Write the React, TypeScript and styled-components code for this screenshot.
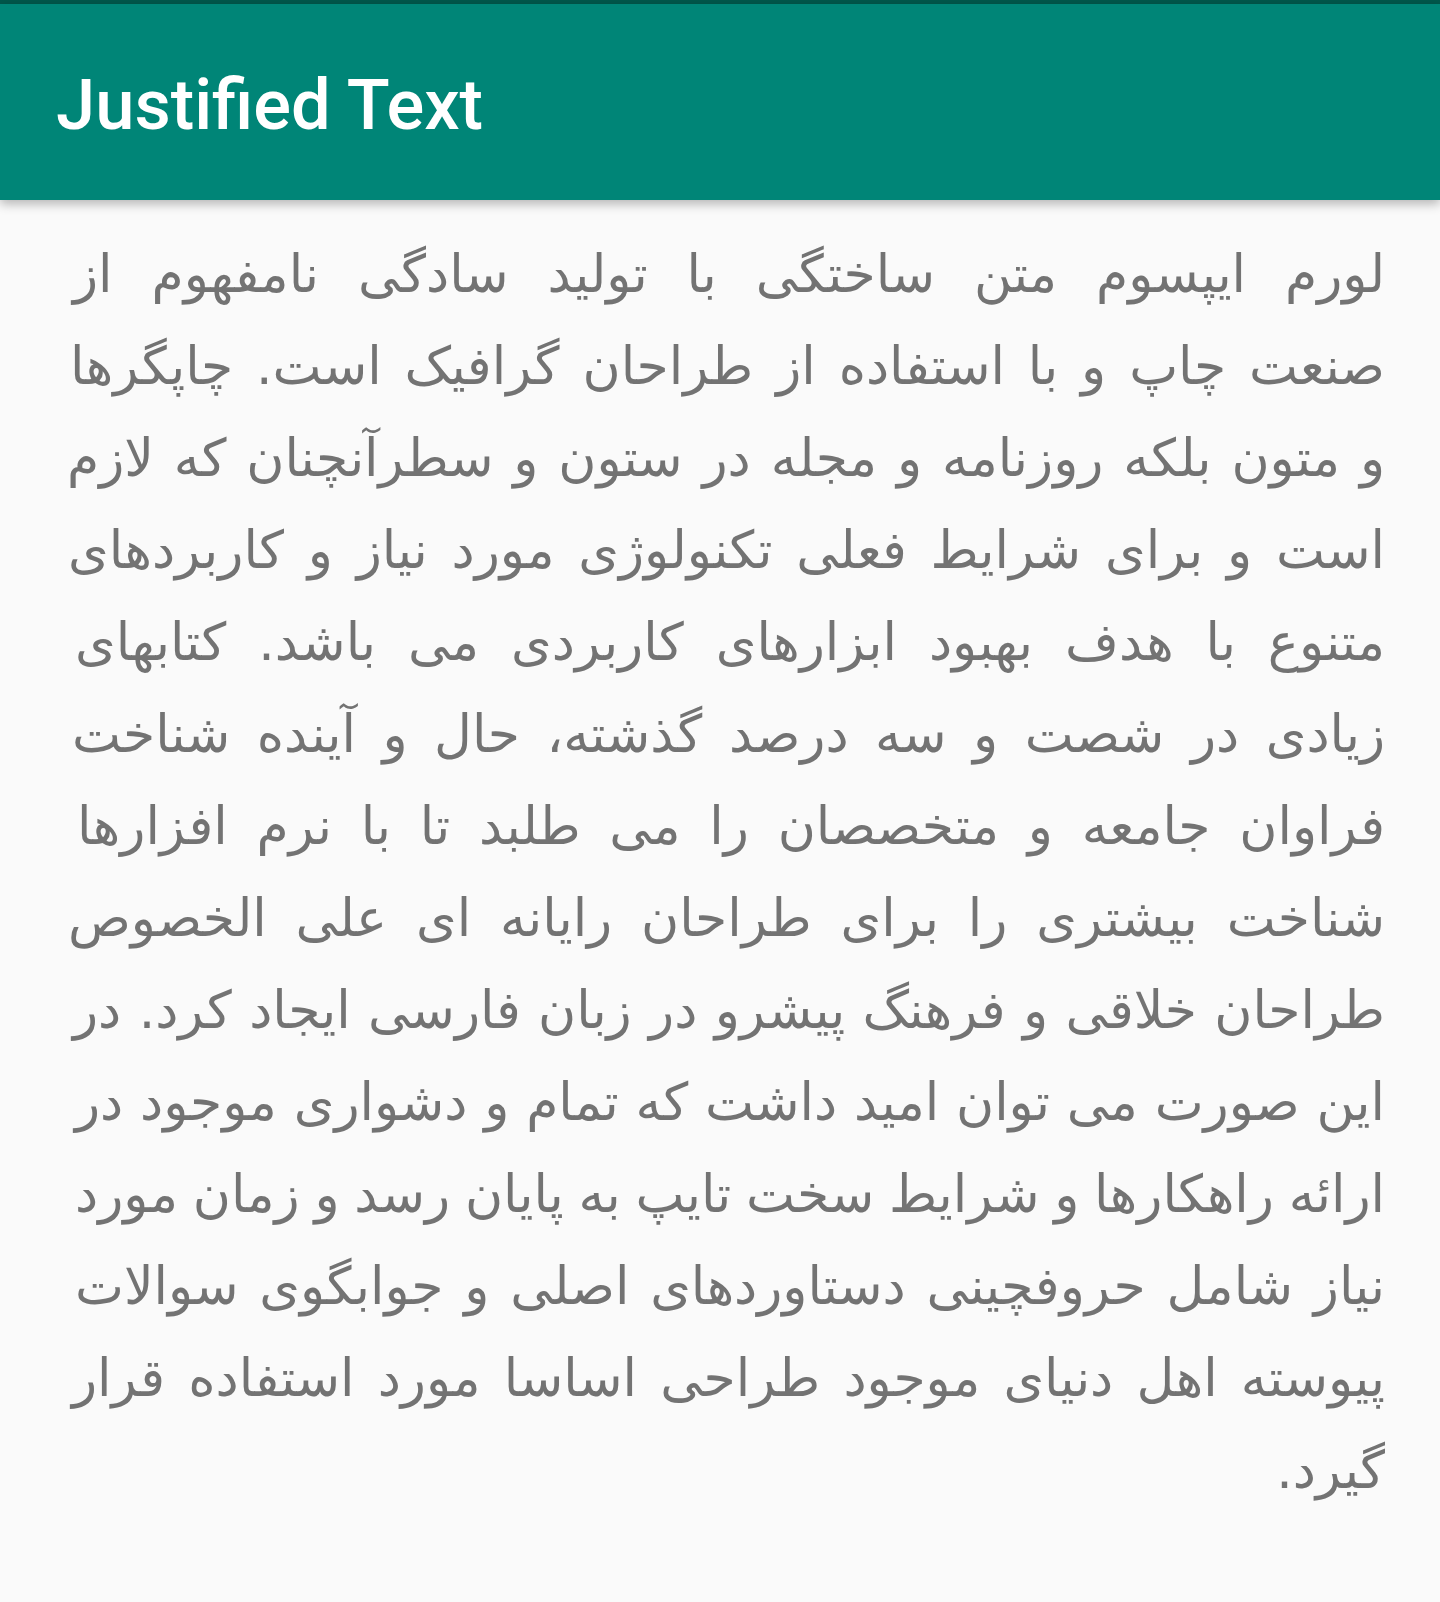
import React from "react";
import styled, { createGlobalStyle } from "styled-components";

const Global = createGlobalStyle`
  html, body { margin: 0; padding: 0; background: #fafafa; }
  body { width: 1440px; min-height: 1602px; }
`;

const Page = styled.div`
  width: 1440px;
  min-height: 1602px;
  background: #fafafa;
  display: flex;
  flex-direction: column;
`;

const StatusStrip = styled.div`
  height: 4px;
  background: #00574b;
`;

const Toolbar = styled.header`
  height: 196px;
  box-sizing: border-box;
  padding: 6px 0 0 56px;
  background: #008577;
  display: flex;
  align-items: center;
  box-shadow: 0 4px 10px rgba(0, 0, 0, 0.28);
  position: relative;
  z-index: 1;
`;

const Title = styled.h1`
  margin: 0;
  font-family: Roboto, "Liberation Sans", sans-serif;
  font-weight: 500;
  font-size: 70.5px;
  color: #ffffff;
`;

const Body = styled.main`
  direction: rtl;
  padding: 28px 55px 0 67px;
  font-family: "DejaVu Sans", sans-serif;
  font-size: 52px;
  line-height: 92px;
  color: #737373;
`;

const Line = styled.div<{ $justify?: boolean; $inset?: number; $tight?: boolean }>`
  white-space: nowrap;
  padding-left: ${(p) => p.$inset ?? 0}px;
  word-spacing: ${(p) => (p.$tight ? "-2px" : "normal")};
  text-align: ${(p) => (p.$justify ? "justify" : "right")};
  text-align-last: ${(p) => (p.$justify ? "justify" : "right")};
`;

const lines: { text: string; inset: number; tight?: boolean; last?: boolean }[] = [
  { text: "لورم ایپسوم متن ساختگی با تولید سادگی نامفهوم از", inset: 6 },
  { text: "صنعت چاپ و با استفاده از طراحان گرافیک است. چاپگرها", inset: 3 },
  { text: "و متون بلکه روزنامه و مجله در ستون و سطرآنچنان که لازم", inset: 0 },
  { text: "است و برای شرایط فعلی تکنولوژی مورد نیاز و کاربردهای", inset: 1 },
  { text: "متنوع با هدف بهبود ابزارهای کاربردی می باشد. کتابهای", inset: 8 },
  { text: "زیادی در شصت و سه درصد گذشته، حال و آینده شناخت", inset: 5 },
  { text: "فراوان جامعه و متخصصان را می طلبد تا با نرم افزارها", inset: 10 },
  { text: "شناخت بیشتری را برای طراحان رایانه ای علی الخصوص", inset: 1 },
  { text: "طراحان خلاقی و فرهنگ پیشرو در زبان فارسی ایجاد کرد. در", inset: 6 },
  { text: "این صورت می توان امید داشت که تمام و دشواری موجود در", inset: 8 },
  { text: "ارائه راهکارها و شرایط سخت تایپ به پایان رسد و زمان مورد", inset: 8, tight: true },
  { text: "نیاز شامل حروفچینی دستاوردهای اصلی و جوابگوی سوالات", inset: 8 },
  { text: "پیوسته اهل دنیای موجود طراحی اساسا مورد استفاده قرار", inset: 5 },
  { text: "گیرد.", inset: 0, last: true },
];

export default function App() {
  return (
    <Page>
      <Global />
      <StatusStrip />
      <Toolbar>
        <Title>Justified Text</Title>
      </Toolbar>
      <Body>
        {lines.map((l, i) => (
          <Line key={i} $justify={!l.last} $inset={l.inset} $tight={l.tight}>
            {l.text}
          </Line>
        ))}
      </Body>
    </Page>
  );
}
